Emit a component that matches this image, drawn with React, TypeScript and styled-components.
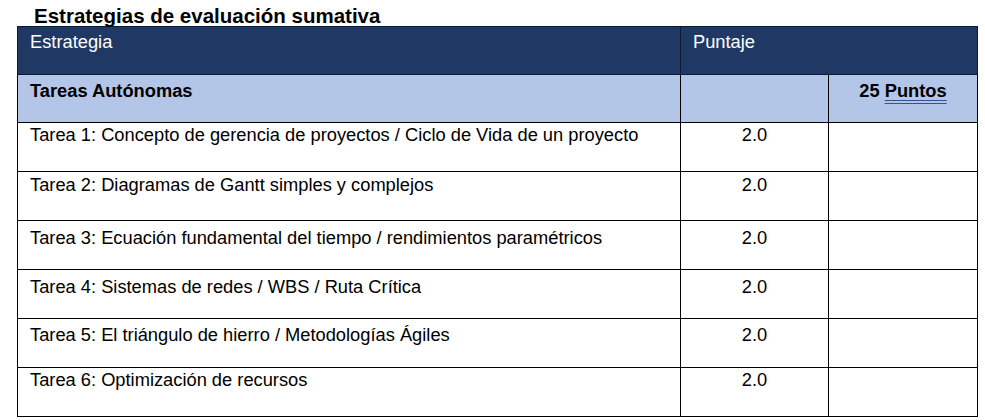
import React from 'react';
import styled, { createGlobalStyle } from 'styled-components';

const GlobalStyle = createGlobalStyle`
    body {
        margin: 0;
        background: #ffffff;
        font-family: 'Liberation Sans', Arial, sans-serif;
        color: #000000;
    }
`;

const StyledPage = styled.div`
    width: 985px;
    height: 420px;
    padding: 0 0 0 17px;
    box-sizing: border-box;
`;

const StyledTitle = styled.h2`
    margin: 0;
    padding: 5px 0 0 17px;
    height: 26px;
    box-sizing: border-box;
    font-size: 20.5px;
    line-height: 21px;
    font-weight: 700;
    white-space: nowrap;
`;

const StyledTable = styled.table`
    width: 960px;
    border-collapse: collapse;
    table-layout: fixed;
    font-size: 18.3px;
`;

const StyledHeadCell = styled.th`
    background: #1f3864;
    color: #ffffff;
    font-weight: 400;
    text-align: left;
    vertical-align: top;
    height: 48px;
    padding: 4px 12px;
    box-sizing: border-box;
    border: 1px solid #0f1b33;
    line-height: 21px;
`;

const StyledSectionCell = styled.td<{ $align?: string }>`
    background: #b4c6e7;
    font-weight: 700;
    text-align: ${({ $align }) => $align || 'left'};
    vertical-align: top;
    height: 48px;
    padding: 5px 12px;
    box-sizing: border-box;
    border: 1px solid #000000;
    line-height: 21px;
    white-space: nowrap;
`;

const StyledUnderline = styled.span`
    text-decoration: underline double #2f5597;
    text-underline-offset: 3px;
`;

const StyledCell = styled.td<{ $align?: string; $offset: number }>`
    text-align: ${({ $align }) => $align || 'left'};
    vertical-align: top;
    height: 49px;
    padding: ${({ $offset }) => $offset}px 12px 0;
    box-sizing: border-box;
    border: 1px solid #000000;
    line-height: 21px;
    white-space: nowrap;
`;

const tareas = [
    { text: 'Tarea 1: Concepto de gerencia de proyectos / Ciclo de Vida de un proyecto', offset: 1 },
    { text: 'Tarea 2: Diagramas de Gantt simples y complejos', offset: 2 },
    { text: 'Tarea 3: Ecuación fundamental del tiempo / rendimientos paramétricos', offset: 6 },
    { text: 'Tarea 4: Sistemas de redes / WBS / Ruta Crítica', offset: 6 },
    { text: 'Tarea 5: El triángulo de hierro / Metodologías Ágiles', offset: 5 },
    { text: 'Tarea 6: Optimización de recursos', offset: 1 },
];

export default function App() {
    return (
        <StyledPage>
            <GlobalStyle />
            <StyledTitle>Estrategias de evaluación sumativa</StyledTitle>
            <StyledTable>
                <colgroup>
                    <col style={{ width: 663 }} />
                    <col style={{ width: 148 }} />
                    <col style={{ width: 149 }} />
                </colgroup>
                <thead>
                    <tr>
                        <StyledHeadCell>Estrategia</StyledHeadCell>
                        <StyledHeadCell colSpan={2}>Puntaje</StyledHeadCell>
                    </tr>
                </thead>
                <tbody>
                    <tr>
                        <StyledSectionCell>Tareas Autónomas</StyledSectionCell>
                        <StyledSectionCell />
                        <StyledSectionCell $align="center">
                            25 <StyledUnderline>Puntos</StyledUnderline>
                        </StyledSectionCell>
                    </tr>
                    {tareas.map((tarea) => (
                        <tr key={tarea.text}>
                            <StyledCell $offset={tarea.offset}>{tarea.text}</StyledCell>
                            <StyledCell $offset={tarea.offset} $align="center">
                                2.0
                            </StyledCell>
                            <StyledCell $offset={tarea.offset} />
                        </tr>
                    ))}
                </tbody>
            </StyledTable>
        </StyledPage>
    );
}
